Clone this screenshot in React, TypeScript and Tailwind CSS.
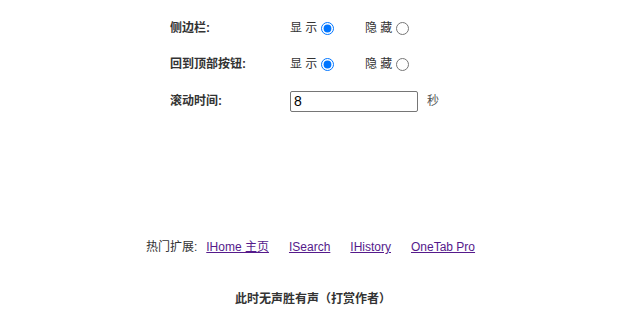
import React from "react";

const font = { fontFamily: '"Liberation Sans", "Noto Sans CJK SC", sans-serif' };

function RadioPair({ name }: { name: string }) {
  return (
    <div className="flex items-center">
      <label className="flex items-center w-[75px]">
        <span>显 示</span>
        <input type="radio" name={name} defaultChecked className="ml-[4px] w-[13px] h-[13px]" />
      </label>
      <label className="flex items-center">
        <span>隐 藏</span>
        <input type="radio" name={name} className="ml-[4px] w-[13px] h-[13px]" />
      </label>
    </div>
  );
}

export default function App() {
  return (
    <div className="w-[626px] h-[318px] bg-white text-[12px] text-[#333] leading-[16px]" style={font}>
      <div className="pl-[170px] pt-[10px] flex flex-col">
        <div className="flex items-center h-[36px]">
          <div className="w-[120px] font-bold">侧边栏:</div>
          <RadioPair name="sidebar" />
        </div>
        <div className="flex items-center h-[36px]">
          <div className="w-[120px] font-bold">回到顶部按钮:</div>
          <RadioPair name="totop" />
        </div>
        <div className="flex items-center h-[38px]">
          <div className="w-[120px] font-bold">滚动时间:</div>
          <input
            type="text"
            defaultValue="8"
            className="w-[128px] h-[21px] border border-[#767676] rounded-[2px] px-[3px] text-[14px] text-black outline-none"
          />
          <span className="ml-[9px] text-[#555]">秒</span>
        </div>
      </div>
      <div className="mt-[119px] flex justify-center items-center pr-[5px]">
        <span className="mr-[9px]">热门扩展:</span>
        <div className="flex gap-[20px]">
          <a href="#" className="text-[#551a8b] underline">IHome 主页</a>
          <a href="#" className="text-[#551a8b] underline">ISearch</a>
          <a href="#" className="text-[#551a8b] underline">IHistory</a>
          <a href="#" className="text-[#551a8b] underline">OneTab Pro</a>
        </div>
      </div>
      <div className="mt-[36px] flex justify-center font-bold">此时无声胜有声（打赏作者）</div>
    </div>
  );
}
